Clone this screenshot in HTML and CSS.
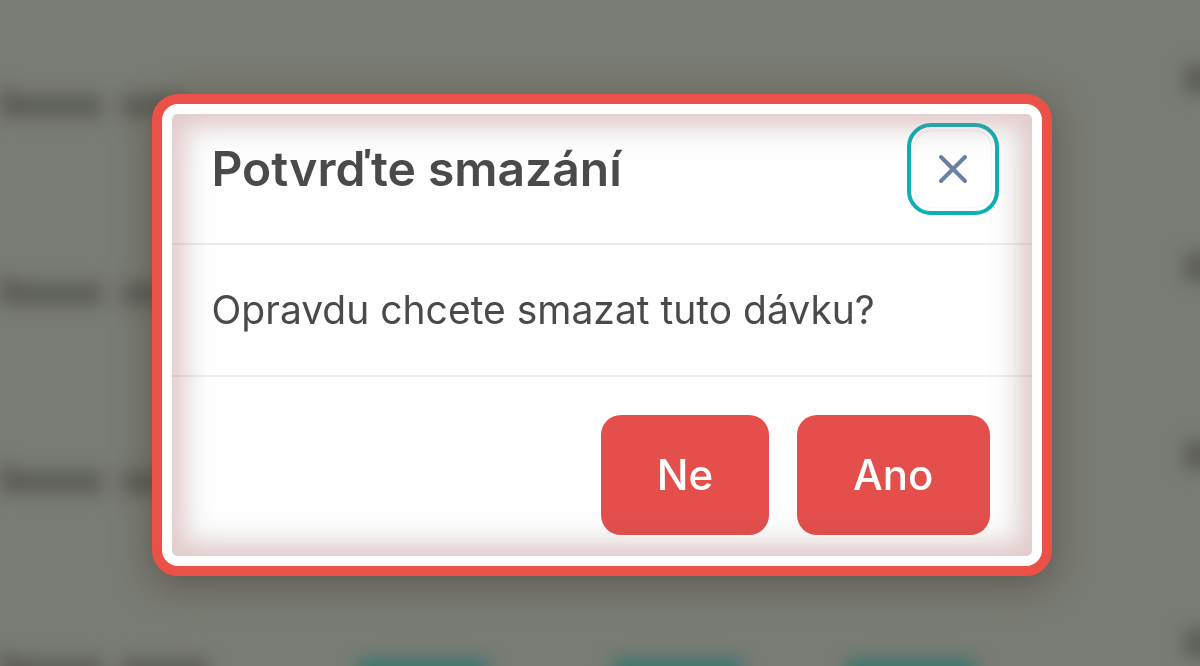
FILE: index.html
```html
<!DOCTYPE html>
<html lang="cs">
<head>
<meta charset="utf-8">
<meta name="viewport" content="width=device-width, initial-scale=1">
<title>Potvrďte smazání</title>
<link rel="stylesheet" href="styles.css">
</head>
<body>
<div class="backdrop" aria-hidden="true">
  <div class="row"><span class="cell"><i class="w-tall"></i><i class="w-long"></i><i class="w-short"></i></span><span class="cell"></span><span class="cell"></span><span class="cell"></span><span class="cell cell-end"><i class="w-dot"></i></span></div>
  <div class="row"><span class="cell"><i class="w-tall"></i><i class="w-long"></i><i class="w-short"></i></span><span class="cell"></span><span class="cell"></span><span class="cell"></span><span class="cell cell-end"><i class="w-dot"></i></span></div>
  <div class="row"><span class="cell"><i class="w-tall"></i><i class="w-long"></i><i class="w-short"></i></span><span class="cell"></span><span class="cell"></span><span class="cell"></span><span class="cell cell-end"><i class="w-dot"></i></span></div>
  <div class="row"><span class="cell"><i class="w-tall"></i><i class="w-long"></i><i class="w-long"></i></span><span class="cell"><i class="w-link"></i></span><span class="cell"><i class="w-link"></i></span><span class="cell"><i class="w-link"></i></span><span class="cell cell-end"><i class="w-dot"></i></span></div>
</div>
<main class="stage">
  <section class="dialog" role="dialog" aria-modal="true" aria-labelledby="dialog-title" aria-describedby="dialog-text">
    <div class="panel">
      <header class="head">
        <h1 class="title" id="dialog-title">Potvrďte smazání</h1>
        <button class="close" type="button" aria-label="Zavřít">
          <span class="close-face">
            <svg class="close-icon" viewBox="0 0 30 30" aria-hidden="true"><path d="M3 3 27 27M27 3 3 27"/></svg>
          </span>
        </button>
      </header>
      <p class="message" id="dialog-text">Opravdu chcete smazat tuto dávku?</p>
      <footer class="actions">
        <button class="action" type="button">Ne</button>
        <button class="action" type="button">Ano</button>
      </footer>
    </div>
  </section>
</main>
</body>
</html>
```
FILE: styles.css
```css
* {
  box-sizing: border-box;
}

body {
  margin: 0;
  min-height: 100vh;
  overflow: hidden;
  background: #797c74;
  color: #4a4a4a;
  font-family: Inter, "Liberation Sans", sans-serif;
}

/* Dimmed, out-of-focus table behind the dialog */
.backdrop {
  position: fixed;
  inset: 0;
  overflow: hidden;
  padding-top: 9px;
}

.row {
  display: grid;
  grid-template-columns:
    minmax(0, 358fr) minmax(0, 254fr) minmax(0, 234fr)
    minmax(0, 338fr) minmax(0, 16fr);
  align-items: center;
  height: 188px;
}

.cell {
  display: flex;
  align-items: flex-end;
  filter: blur(9px);
}

.cell i {
  flex: none;
  height: 22px;
  background: #5b5d57;
}

.cell .w-tall {
  width: 16px;
  height: 28px;
}

.cell .w-long {
  width: 86px;
  margin-right: 20px;
}

.cell .w-short {
  width: 60px;
}

.cell .w-link {
  width: 130px;
  height: 24px;
  margin-top: 8px;
  background: #38756e;
}

.cell .w-dot {
  width: 40px;
  height: 28px;
}

.cell-end {
  align-self: start;
  padding-top: 56px;
}

.stage {
  position: relative;
  display: flex;
  align-items: center;
  justify-content: center;
  min-height: 100vh;
  padding-top: 3px;
  padding-left: 3px;
}

.dialog {
  width: 75vw;
  padding: 10px;
  border: 10px solid #eb5146;
  border-radius: 26px;
  background: #fff;
  box-shadow: 0 8px 36px rgba(65, 50, 40, 0.5);
}

.panel {
  position: relative;
  border-radius: 5px;
  overflow: hidden;
}

/* Inner glow lies over the content, buttons included */
.panel::after {
  content: "";
  position: absolute;
  inset: 0;
  border-radius: inherit;
  box-shadow: inset 0 0 20px 11px rgba(225, 120, 125, 0.24), inset 0 0 32px 15px rgba(95, 105, 102, 0.18);
  pointer-events: none;
}

.head {
  display: flex;
  align-items: flex-start;
  justify-content: space-between;
  padding: 9px 33px 28px 40px;
  border-bottom: 2px solid #eee;
}

.title {
  margin: 0;
  font-size: 48px;
  font-weight: 600;
  line-height: 92px;
}

.close {
  width: 92px;
  height: 92px;
  padding: 4px;
  border: 4px solid #0cb0b8;
  border-radius: 24px;
  background: #fff;
}

.close-face {
  display: flex;
  align-items: center;
  justify-content: center;
  height: 100%;
  border-radius: 16px;
  box-shadow: 0 0 1px rgba(16, 120, 125, 0.4);
}

.close-icon {
  width: 30px;
  height: 30px;
  fill: none;
  stroke: #6c80a5;
  stroke-width: 4;
  stroke-linecap: round;
}

.message {
  margin: 0;
  padding: 35px 40px;
  border-bottom: 2px solid #eee;
  font-size: 39px;
  line-height: 60px;
}

.actions {
  display: flex;
  justify-content: flex-end;
  gap: 28px;
  padding: 38px 42px 21px;
}

.action {
  padding: 0 56px;
  border: 0;
  border-radius: 20px;
  background: #e44f4b;
  color: #fff;
  font: inherit;
  font-size: 42px;
  font-weight: 500;
  line-height: 120px;
}
```
